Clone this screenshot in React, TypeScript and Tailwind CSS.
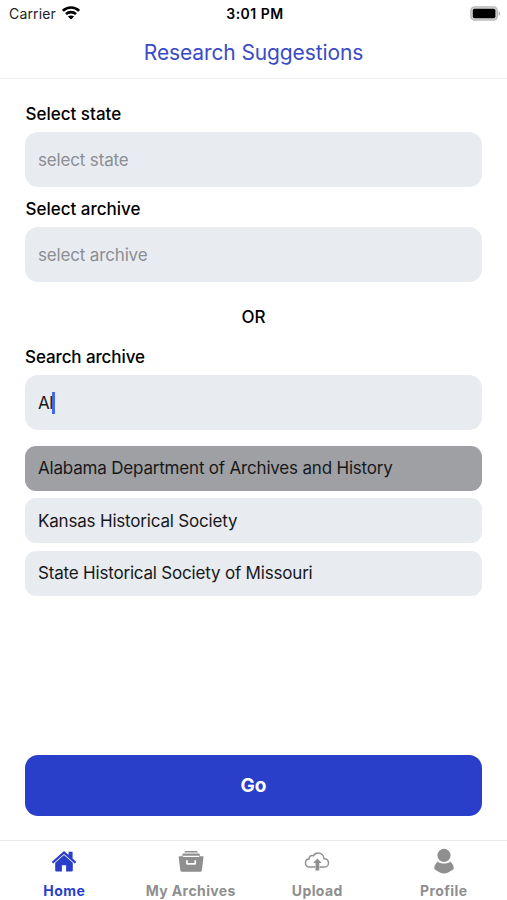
import React, { useState } from 'react';

const WifiIcon: React.FC = () => (
    <svg width="18" height="14" viewBox="0 0 18 14" fill="none" stroke="#000" strokeWidth="2.6">
        <path d="M0.9 4.8C5.4 0.4 12.6 0.4 17.1 4.8" />
        <path d="M4 8.1C6.8 5.4 11.2 5.4 14 8.1" />
        <path d="M9 13.6L5.9 10.6C7.6 9 10.4 9 12.1 10.6Z" fill="#000" stroke="none" />
    </svg>
);

const BatteryIcon: React.FC = () => (
    <svg width="31" height="15" viewBox="0 0 31 15">
        <rect x="0.9" y="0.9" width="26.4" height="13.2" rx="3.8" fill="#d5d5d5" stroke="#b8b8b8" strokeWidth="1.4" />
        <rect x="2.8" y="2.8" width="22.6" height="9.4" rx="1.6" fill="#000" />
        <path d="M28.6 5.2C30.6 6 30.6 9 28.6 9.8Z" fill="#b5b5b5" />
    </svg>
);

const HomeIcon: React.FC = () => (
    <svg width="26" height="26" viewBox="0 0 26 26" fill="currentColor">
        <path d="M13 2.9L17.6 7V3.8H21.6V10.6L25.3 13.9L23.8 15.6L13 6L2.2 15.6L0.7 13.9Z" />
        <path d="M13 7L21.8 14.8V22.2Q21.8 23.4 20.6 23.4H15.1V17.2H10.9V23.4H5.4Q4.2 23.4 4.2 22.2V14.8Z" />
    </svg>
);

const ArchiveIcon: React.FC = () => (
    <svg width="26" height="26" viewBox="0 0 26 26" fill="currentColor">
        <path d="M7.4 3H18.8Q19.6 3 19.8 4.6H6.4Q6.6 3 7.4 3Z" />
        <path d="M5.5 5.5H20.7Q21.8 5.5 22.2 7.8H4Q4.4 5.5 5.5 5.5Z" />
        <path
            fillRule="evenodd"
            d="M1.1 8.3H5L5.3 9.1H20.9L21.2 8.3H25.1Q25.6 8.3 25.5 9L23.9 22.2Q23.7 23.8 22.3 23.8H3.9Q2.5 23.8 2.3 22.2L0.7 9Q0.6 8.3 1.1 8.3ZM8.1 12.3V15.5Q8.1 16.8 9.4 16.8H16.8Q18.1 16.8 18.1 15.5V12.3H16.4V15H9.8V12.3Z"
        />
    </svg>
);

const UploadIcon: React.FC = () => (
    <svg width="26" height="26" viewBox="0 0 26 26" fill="none">
        <path
            d="M11.2 19H5.8C3.1 19 1.5 17.1 1.5 14.9C1.5 12.6 3.1 11.1 5.1 11C4.7 8.5 7.2 6.7 9.3 7.9C10.4 5.9 12 5 14.1 5C17.5 5 20 7.5 20 10.7C22.6 10.5 24.5 12.5 24.5 14.9C24.5 17.1 22.8 19 20.6 19H15.6"
            stroke="currentColor"
            strokeWidth="1.4"
        />
        <path d="M13.4 10.4L17.7 15.1H15.3V22.4H11.5V15.1H9.1Z" fill="currentColor" />
    </svg>
);

const ProfileIcon: React.FC = () => (
    <svg width="26" height="26" viewBox="0 0 26 26" fill="currentColor">
        <circle cx="13" cy="7.3" r="6.6" />
        <path d="M6.6 13.7C10 16.1 16 16.1 19.4 13.7C21.3 15.3 22.4 17.3 22.8 19.8Q22.9 21 21.8 21.7C18.4 24 15.5 25.4 13 25.4C10.5 25.4 7.6 24 4.2 21.7Q3.1 21 3.2 19.8C3.6 17.3 4.7 15.3 6.6 13.7Z" />
    </svg>
);

const archives = [
    'Alabama Department of Archives and History',
    'Kansas Historical Society',
    'State Historical Society of Missouri',
];

const tabs = [
    { label: 'Home', Icon: HomeIcon },
    { label: 'My Archives', Icon: ArchiveIcon },
    { label: 'Upload', Icon: UploadIcon },
    { label: 'Profile', Icon: ProfileIcon },
];

const SelectField: React.FC<{ label: string; placeholder: string }> = ({ label, placeholder }) => (
    <div>
        <div className="h-6 pl-[0.5px] text-[17px] leading-6 font-medium">{label}</div>
        <button className="mt-1.5 flex h-[55px] w-full items-center rounded-[13px] bg-[#e8ebf0] px-[13px] pt-0.5 text-[17px] tracking-[-0.16px] text-[#8b8e93]">
            {placeholder}
        </button>
    </div>
);

const App: React.FC = () => {
    const [selected, setSelected] = useState(archives[0]);
    const [activeTab, setActiveTab] = useState('Home');

    return (
        <div className="flex h-[900px] w-full flex-col overflow-hidden bg-white font-['Inter',sans-serif] text-black">
            <div className="grid h-7 grid-cols-3 items-center pr-[6px] pb-0.5 pl-[9px] text-[14px]">
                <div className="flex items-center gap-[6px]">
                    <span className="tracking-[0.15px] text-[#222]">Carrier</span>
                    <WifiIcon />
                </div>
                <span className="text-center font-semibold tracking-[0.5px]">3:01 PM</span>
                <div className="flex justify-end">
                    <BatteryIcon />
                </div>
            </div>
            <header className="flex h-[51px] items-center justify-center border-b border-[#f2f2f2] text-[21px] tracking-[-0.12px] text-[#3a4bc5]">
                <h1>Research Suggestions</h1>
            </header>

            <main className="flex grow flex-col px-[25px] pt-[23px]">
                <SelectField label="Select state" placeholder="select state" />
                <div className="h-2.5" />
                <SelectField label="Select archive" placeholder="select archive" />
                <div className="mt-[23px] h-6 text-center text-[17px] leading-6 font-medium">OR</div>
                <div className="mt-4 h-6 text-[17px] leading-6 font-medium tracking-[-0.1px]">Search archive</div>
                <div className="mt-1.5 flex h-[55px] items-center rounded-[13px] bg-[#e8ebf0] px-[13px] text-[17px] text-[#17181a]">
                    <span className="pt-0.5 tracking-[-0.4px]">Al</span>
                    <span className="-ml-[1.5px] h-[22px] w-[3px] bg-[#4169e8]" />
                </div>
                <div className="mt-[15.5px] flex flex-col gap-[7.5px]">
                    {archives.map((name) => (
                        <button
                            key={name}
                            onClick={() => setSelected(name)}
                            className={`flex h-[45px] items-center rounded-[11px] px-[13px] pt-0.5 text-[17px] tracking-[-0.19px] text-[#17181a] ${
                                name === selected ? 'bg-[#9fa0a4]' : 'bg-[#e8ebf0]'
                            }`}
                        >
                            {name}
                        </button>
                    ))}
                </div>
                <button className="mt-auto mb-6 h-[61px] rounded-[13px] bg-[#293fca] pt-px text-[19px] font-bold text-white">
                    Go
                </button>
            </main>

            <nav className="grid h-[60px] grid-cols-4 border-t border-[#ebebeb] pl-px">
                {tabs.map(({ label, Icon }) => (
                    <button
                        key={label}
                        onClick={() => setActiveTab(label)}
                        className={`flex flex-col items-center pt-[7px] text-[14px] leading-5 font-bold tracking-[0.4px] ${
                            label === activeTab ? 'text-[#293fca]' : 'text-[#8f8f8f]'
                        }`}
                    >
                        <Icon />
                        <span className="mt-[7px]">{label}</span>
                    </button>
                ))}
            </nav>
        </div>
    );
};

export default App;
